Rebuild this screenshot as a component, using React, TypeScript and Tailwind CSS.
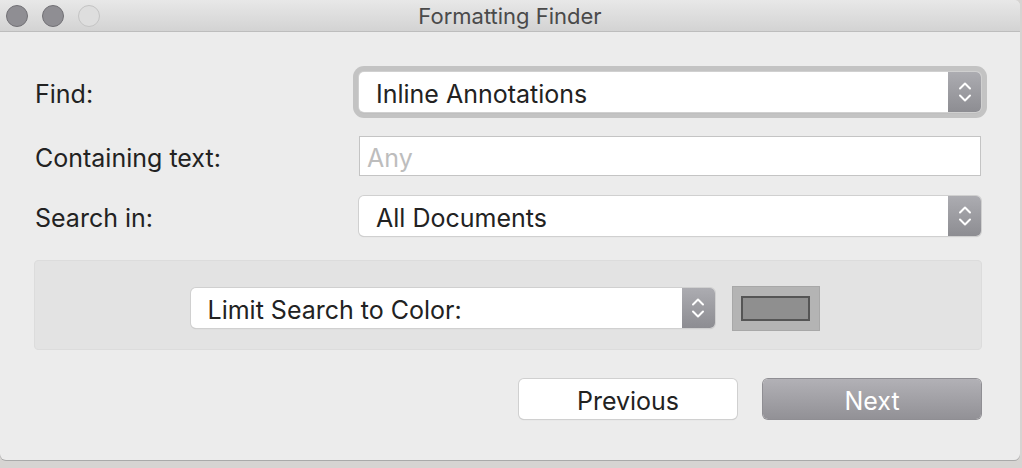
import React from "react";

const font = { fontFamily: "Inter, 'Noto Sans', sans-serif" };

function Stepper() {
  return (
    <div className="flex h-full w-[33px] flex-col items-center justify-center gap-[4px] rounded-r-[5px] bg-gradient-to-b from-[#acacb1] to-[#8d8d92]">
      <svg width="14" height="9" viewBox="0 0 14 9">
        <path d="M2 7.5 L7 2.5 L12 7.5" fill="none" stroke="white" strokeWidth="2" strokeLinecap="round" strokeLinejoin="round" />
      </svg>
      <svg width="14" height="9" viewBox="0 0 14 9">
        <path d="M2 1.5 L7 6.5 L12 1.5" fill="none" stroke="white" strokeWidth="2" strokeLinecap="round" strokeLinejoin="round" />
      </svg>
    </div>
  );
}

function Select({ label, className = "" }: { label: string; className?: string }) {
  return (
    <div
      className={`flex h-[40px] items-stretch rounded-[5px] bg-white shadow-[0_0_0_1px_#d0d0d0,0_1px_1px_rgba(0,0,0,0.18)] ${className}`}
    >
      <div className="flex flex-1 items-center pl-[17px] pt-[3px] text-[25px] leading-[32px] text-[#222]">{label}</div>
      <Stepper />
    </div>
  );
}

export default function App() {
  return (
    <div className="h-[468px] w-[1022px] overflow-hidden bg-[#d6d4d2]" style={font}>
      <div className="flex h-[460px] w-[1020px] flex-col overflow-hidden rounded-b-[6px] rounded-tr-[6px] bg-[#ececec] shadow-[0_1px_0_#a9a9a9]">
        {/* title bar */}
        <div className="relative flex h-[32px] shrink-0 items-center justify-center border-b border-[#bdbdbd] bg-gradient-to-b from-[#e8e8e8] to-[#d3d3d3]">
          <div className="absolute left-[6px] top-[5px] flex gap-[14px]">
            <div className="h-[22px] w-[22px] rounded-full border border-[#717075] bg-[#8f8e93]" />
            <div className="h-[22px] w-[22px] rounded-full border border-[#717075] bg-[#8f8e93]" />
            <div className="h-[22px] w-[22px] rounded-full border border-[#c4c4c4] bg-[#dedede]" />
          </div>
          <span className="text-[22px] leading-none text-[#4a4a4a]">Formatting Finder</span>
        </div>

        {/* body */}
        <div className="flex flex-col pl-[35px] pr-[39px] pt-[40px]">
          <div className="flex h-[40px] items-center">
            <div className="w-[324px] pt-[3px] text-[25px] leading-[32px] text-[#222]">Find:</div>
            <div className="flex-1">
              <div className="-m-[6px] rounded-[11px] bg-[#c3c3c3] p-[6px]">
                <Select label="Inline Annotations" />
              </div>
            </div>
          </div>

          <div className="mt-[24px] flex h-[40px] items-center">
            <div className="w-[324px] pt-[3px] text-[25px] leading-[32px] text-[#222]">Containing text:</div>
            <div className="flex h-[40px] flex-1 items-center border border-[#c4c4c4] bg-white pl-[7px] pt-[3px] text-[25px] leading-[32px] text-[#bdbdbd]">
              Any
            </div>
          </div>

          <div className="mt-[20px] flex h-[40px] items-center">
            <div className="w-[324px] pt-[3px] text-[25px] leading-[32px] text-[#222]">Search in:</div>
            <div className="flex-1">
              <Select label="All Documents" />
            </div>
          </div>

          <div className="ml-[-1px] mr-[-1px] mt-[24px] flex h-[90px] items-center justify-center gap-[17px] rounded-[4px] border border-[#dcdcdc] bg-[#e3e3e3] pr-[6px] pt-[6px]">
            <Select label="Limit Search to Color:" className="w-[524px]" />
            <div className="flex h-[45px] w-[88px] items-center justify-center border border-[#a8a8a8] bg-[#b4b4b4]">
              <div className="h-[25px] w-[69px] border-2 border-[#555] bg-[#8f8f8f]" />
            </div>
          </div>

          <div className="mt-[29px] flex justify-end gap-[26px]">
            <div className="flex h-[40px] w-[218px] items-center justify-center rounded-[5px] bg-white pt-[3px] text-[25px] leading-[32px] text-[#222] shadow-[0_0_0_1px_#d0d0d0,0_1px_1px_rgba(0,0,0,0.18)]">
              Previous
            </div>
            <div className="flex h-[40px] w-[218px] items-center justify-center rounded-[5px] bg-gradient-to-b from-[#b2b1b6] to-[#929196] pt-[3px] text-[25px] leading-[32px] text-white shadow-[0_0_0_1px_#8f8e93]">
              Next
            </div>
          </div>
        </div>
      </div>
    </div>
  );
}
